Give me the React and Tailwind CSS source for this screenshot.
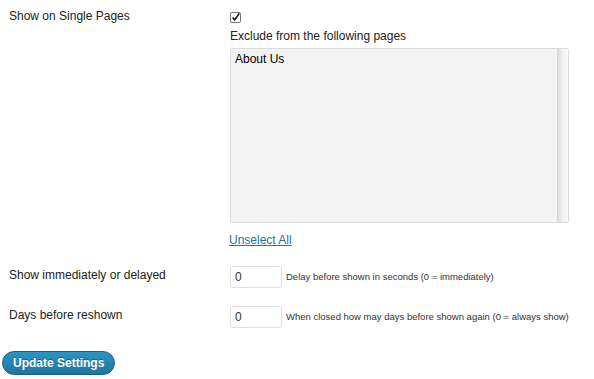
import React from 'react';

const Row = ({ label, children, className = '', labelClass = '' }) => (
    <div className={`flex ${className}`}>
        <div className={`w-[221px] shrink-0 pl-[9px] text-[12px] text-[#222] ${labelClass}`}>{label}</div>
        <div className="flex-1">{children}</div>
    </div>
);

const NumberField = ({ hint }) => (
    <div className="flex items-center h-[22px]">
        <input
            type="text"
            defaultValue="0"
            className="w-[52px] h-[22px] rounded-[3px] border border-[#dfdfdf] bg-white px-[4px] text-[12px] text-[#333] outline-none"
        />
        <span className="ml-[4px] text-[9.5px] text-[#333] whitespace-nowrap">{hint}</span>
    </div>
);

export default function App() {
    return (
        <div className="w-[594px] h-[379px] bg-white font-['Liberation_Sans',Arial,sans-serif] overflow-hidden">
            <Row label="Show on Single Pages" className="pt-[8px]" labelClass="leading-[16px]">
                <div className="pl-[9px] mt-[4px] h-[11px] flex items-center">
                    <span className="w-[11px] h-[11px] border border-[#777] rounded-[2px] bg-white flex items-center justify-center">
                        <svg width="11" height="11" viewBox="0 0 11 11">
                            <path d="M2 5.5 L4.5 8.5 L10 0.5" fill="none" stroke="#111" strokeWidth="2" />
                        </svg>
                    </span>
                </div>
                <div className="pl-[9px] mt-[6px] text-[12px] leading-[15px] text-[#222]">Exclude from the following pages</div>
                <div className="ml-[9px] mt-[4px] w-[339px] h-[175px] border border-[#dcdcdc] rounded-[2px] bg-[#f3f3f3] flex">
                    <div className="flex-1 pl-[4px] pt-[3px] text-[12px] leading-[15px] text-black">About Us</div>
                    <div className="w-[11px] border-l border-[#d6d6d6] bg-gradient-to-r from-[#dedede] via-[#f2f2f2] to-[#fafafa]"></div>
                </div>
                <div className="pl-[8px] mt-[8px] leading-[15px]">
                    <a href="#" className="text-[12px] text-[#21759b] underline">Unselect All</a>
                </div>
            </Row>
            <Row label="Show immediately or delayed" className="mt-[18px]" labelClass="leading-[18px]">
                <div className="pl-[9px]">
                    <NumberField hint="Delay before shown in seconds (0 = immediately)" />
                </div>
            </Row>
            <Row label="Days before reshown" className="mt-[18px]" labelClass="leading-[18px]">
                <div className="pl-[9px]">
                    <NumberField hint="When closed how may days before shown again (0 = always show)" />
                </div>
            </Row>
            <div className="pl-[2px] mt-[22px]">
                <button className="h-[24px] px-[10px] rounded-full border border-[#1b607f] bg-gradient-to-b from-[#2a95c5] to-[#21759b] text-white text-[12px] font-bold [text-shadow:0_-1px_0_rgba(0,0,0,0.3)]">
                    Update Settings
                </button>
            </div>
        </div>
    );
}
